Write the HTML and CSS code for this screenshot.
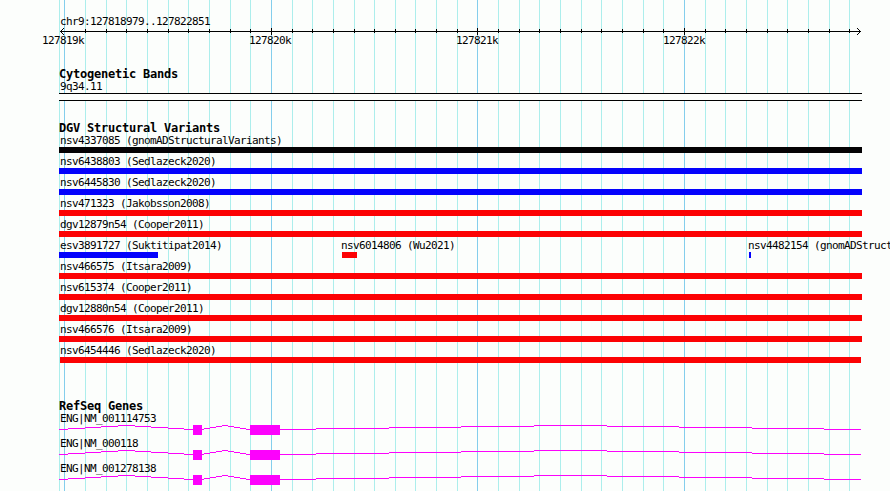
FILE: index.html
```html
<!DOCTYPE html>
<html>
<head>
    <meta charset="UTF-8">
    <title>chr9:127818979..127822851</title>
    <link rel="stylesheet" href="styles.css">
</head>
<body>
    <div class="browser">
        <svg class="grid" width="890" height="491" shape-rendering="crispEdges"></svg>

        <div class="ruler">
            <div class="label">chr9:127818979..127822851</div>
            <svg class="axis" width="890" height="11" shape-rendering="crispEdges"></svg>
            <div class="scale">
                <span>127819k</span>
                <span>127820k</span>
                <span>127821k</span>
                <span>127822k</span>
            </div>
        </div>

        <div class="track cyto">
            <div class="title">Cytogenetic Bands</div>
            <div class="label">9q34.11</div>
            <div class="band"></div>
        </div>

        <div class="track variants">
            <div class="title">DGV Structural Variants</div>
            <div class="row"><div class="label">nsv4337085 (gnomADStructuralVariants)</div><div class="bar black"></div></div>
            <div class="row"><div class="label">nsv6438803 (Sedlazeck2020)</div><div class="bar blue"></div></div>
            <div class="row"><div class="label">nsv6445830 (Sedlazeck2020)</div><div class="bar blue"></div></div>
            <div class="row"><div class="label">nsv471323 (Jakobsson2008)</div><div class="bar red"></div></div>
            <div class="row"><div class="label">dgv12879n54 (Cooper2011)</div><div class="bar red"></div></div>
            <div class="row split">
                <div class="item first"><div class="label">esv3891727 (Suktitipat2014)</div><div class="bar blue"></div></div>
                <div class="item second"><div class="label">nsv6014806 (Wu2021)</div><div class="bar red"></div></div>
                <div class="item third"><div class="label">nsv4482154 (gnomADStructuralVariants)</div><div class="bar blue"></div></div>
            </div>
            <div class="row"><div class="label">nsv466575 (Itsara2009)</div><div class="bar red"></div></div>
            <div class="row"><div class="label">nsv615374 (Cooper2011)</div><div class="bar red"></div></div>
            <div class="row"><div class="label">dgv12880n54 (Cooper2011)</div><div class="bar red"></div></div>
            <div class="row"><div class="label">nsv466576 (Itsara2009)</div><div class="bar red"></div></div>
            <div class="row"><div class="label">nsv6454446 (Sedlazeck2020)</div><div class="bar red inset"></div></div>
        </div>

        <div class="track genes">
            <div class="title">RefSeq Genes</div>
            <div class="gene"><div class="label">ENG|NM_001114753</div></div>
            <div class="gene"><div class="label">ENG|NM_000118</div></div>
            <div class="gene"><div class="label">ENG|NM_001278138</div></div>
        </div>
    </div>
    <script src="script.js"></script>
</body>
</html>
```

FILE: styles.css
```css
body {
    margin: 0;
    background-color: rgb(252, 254, 252);
    color: black;
    font-family: "DejaVu Sans Mono", monospace;
    font-size: 11px;
    overflow: hidden;
}
.browser {
    position: relative;
    width: 890px;
    height: 491px;
    overflow: hidden;
}
.grid {
    position: absolute;
    top: 0;
    left: 0;
    z-index: -1;
}
svg {
    display: block;
}
.label {
    height: 12px;
    line-height: 14px;
    padding-left: 60px;
    letter-spacing: -0.62px;
    white-space: pre;
}
.title {
    height: 12px;
    line-height: 13px;
    padding-left: 59px;
    font-size: 12px;
    font-weight: bold;
    letter-spacing: -0.22px;
}
.ruler {
    padding-top: 15px;
    height: 53px;
}
.axis {
    margin-top: -1px;
}
.scale {
    display: flex;
    gap: 165px;
    padding-left: 42px;
    margin-top: -2px;
    line-height: 12px;
    letter-spacing: -0.62px;
}
.scale span {
    width: 42px;
}
.band {
    box-sizing: border-box;
    width: 803px;
    height: 8px;
    margin: 1px 0 0 59px;
    border-top: 1px solid black;
    border-bottom: 1px solid black;
    background-color: rgb(252, 254, 252);
}
.variants {
    padding-top: 21px;
}
.row {
    height: 21px;
}
.bar {
    width: 803px;
    height: 6px;
    margin: 1px 0 0 59px;
}
.black {
    background-color: rgb(4, 2, 4);
}
.blue {
    background-color: rgb(4, 2, 252);
}
.red {
    background-color: rgb(252, 2, 4);
}
.bar.inset {
    width: 801px;
    margin-left: 60px;
}
.split {
    display: flex;
    padding-left: 59px;
}
.item {
    flex: none;
}
.item .label {
    padding-left: 0;
    margin-left: -1px;
}
.item .bar {
    margin-left: 0;
}
.first {
    width: 283px;
}
.first .label {
    margin-left: 1px;
}
.first .bar {
    width: 99px;
}
.second {
    width: 407px;
}
.second .bar {
    width: 15px;
}
.third .bar {
    width: 2px;
}
.genes {
    padding-top: 35px;
}
.gene {
    height: 25px;
}
```

FILE: script.js
```js
const NS = 'http://www.w3.org/2000/svg';
const major = [64, 271, 477, 684];
const minor = [59, 85, 106, 126, 147, 168, 188, 209, 230, 250, 292, 312, 333, 354, 374, 395, 415, 436, 457,
    498, 519, 539, 560, 581, 601, 622, 643, 663, 705, 725, 746, 767, 787, 808, 829, 849];

function rect(svg, x, y, w, h, color) {
    const r = document.createElementNS(NS, 'rect');
    r.setAttribute('x', x);
    r.setAttribute('y', y);
    r.setAttribute('width', w);
    r.setAttribute('height', h);
    r.setAttribute('fill', color);
    svg.appendChild(r);
}

const grid = document.querySelector('.grid');
minor.forEach(x => rect(grid, x, 0, 1, 491, 'rgb(172, 238, 236)'));
major.forEach(x => rect(grid, x, 0, 1, 491, 'rgb(132, 206, 236)'));

// axis line is the sixth row of the svg
const axis = document.querySelector('.axis');
rect(axis, 60, 5, 801, 1, 'black');
minor.slice(1).forEach(x => rect(axis, x, 3, 1, 4, 'black'));
major.slice(1).forEach(x => rect(axis, x, 2, 1, 7, 'black'));
for (let i = 1; i < 4; i++) {
    [5 - i, 5 + i].forEach(y => {
        rect(axis, 60 + i, y, 1, 1, 'black');
        rect(axis, 860 - i, y, 1, 1, 'black');
    });
}

// intron steps: start, end, height above the baseline
const introns = [
    [59, 68, 0], [68, 85, 1], [85, 101, 2], [101, 118, 3], [118, 135, 4], [135, 151, 3], [151, 168, 2], [168, 184, 1], [184, 193, 0],
    [202, 204, 0], [204, 210, 1], [210, 216, 2], [216, 222, 3], [222, 228, 4], [228, 234, 3], [234, 240, 2], [240, 246, 1], [246, 250, 0],
    [280, 316, 0], [316, 389, 1], [389, 461, 2], [461, 534, 3], [534, 607, 4], [607, 679, 3], [679, 752, 2], [752, 824, 1], [824, 861, 0]
];
document.querySelectorAll('.gene').forEach(gene => {
    const svg = document.createElementNS(NS, 'svg');
    svg.setAttribute('width', 890);
    svg.setAttribute('height', 13);
    svg.setAttribute('shape-rendering', 'crispEdges');
    introns.forEach(([a, b, up]) => rect(svg, a, 5 - up, b - a, 1, 'rgb(252, 2, 252)'));
    rect(svg, 193, 1, 9, 10, 'rgb(252, 2, 252)');
    rect(svg, 250, 1, 30, 10, 'rgb(252, 2, 252)');
    gene.appendChild(svg);
});
```
